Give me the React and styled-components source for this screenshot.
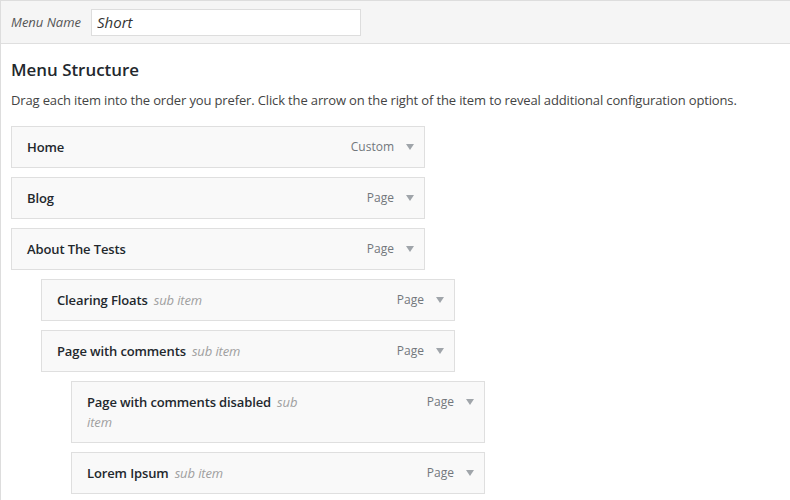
import styled, { createGlobalStyle } from 'styled-components';

const GlobalStyle = createGlobalStyle`
  html, body {
    margin: 0;
    padding: 0;
    background: #fff;
  }
  body {
    font-family: 'Open Sans', 'Noto Sans', sans-serif;
    color: #444;
  }
`;

const Frame = styled.div`
  border-left: 1px solid #ddd;
  border-top: 1px solid #ddd;
  min-height: 100vh;
  box-sizing: border-box;
  background: #fff;
`;

const Header = styled.div`
  display: flex;
  align-items: center;
  height: 42px;
  padding: 0 10px;
  background: #f5f5f5;
  border-bottom: 1px solid #dfdfdf;
`;

const NameLabel = styled.label`
  font-size: 13px;
  font-style: italic;
  color: #555;
  margin-right: 10px;
`;

const NameInput = styled.input`
  box-sizing: border-box;
  width: 270px;
  height: 27px;
  padding: 0 5px;
  border: 1px solid #ddd;
  background: #fff;
  font-family: inherit;
  font-size: 15px;
  font-style: italic;
  color: #333;
  outline: none;
`;

const Body = styled.div`
  padding: 0 10px;
`;

const Heading = styled.h3`
  margin: 14px 0 0;
  font-size: 16.9px;
  font-weight: 600;
  line-height: 24px;
  color: #23282d;
`;

const Description = styled.p`
  margin: 8px 0 0;
  font-size: 13px;
  line-height: 20px;
  letter-spacing: -0.14px;
  color: #444;
`;

const MenuList = styled.ul`
  list-style: none;
  margin: 16px 0 0;
  padding: 0;
`;

const MenuItem = styled.li`
  margin: 0 0 9px ${(p) => p.$depth * 30}px;
`;

const Handle = styled.div`
  position: relative;
  box-sizing: border-box;
  width: 414px;
  padding: 10px 15px;
  border: 1px solid #dfdfdf;
  background: #f9f9f9;
  line-height: 20px;
`;

const ItemTitle = styled.span`
  display: block;
  margin-right: 169px;
  font-size: 13px;
  font-weight: 600;
  letter-spacing: -0.12px;
  color: #23282d;
`;

const SubLabel = styled.span`
  margin-left: 6px;
  font-style: italic;
  font-weight: 400;
  color: #a0a0a0;
`;

const Controls = styled.span`
  position: absolute;
  top: 10px;
  right: 10px;
  display: flex;
  align-items: center;
  gap: 12px;
  height: 20px;
`;

const ItemType = styled.span`
  font-size: 12px;
  color: #72777c;
`;

const Arrow = () => (
  <svg width="8" height="6" viewBox="0 0 8 6">
    <polygon points="0,0 8,0 4,6" fill="#a0a5aa" />
  </svg>
);

const items = [
  { title: 'Home', type: 'Custom', depth: 0 },
  { title: 'Blog', type: 'Page', depth: 0 },
  { title: 'About The Tests', type: 'Page', depth: 0 },
  { title: 'Clearing Floats', type: 'Page', depth: 1 },
  { title: 'Page with comments', type: 'Page', depth: 1 },
  { title: 'Page with comments disabled', type: 'Page', depth: 2 },
  { title: 'Lorem Ipsum', type: 'Page', depth: 2 },
];

export default function App() {
  return (
    <>
      <GlobalStyle />
      <Frame>
        <Header>
          <NameLabel htmlFor="menu-name">Menu Name</NameLabel>
          <NameInput id="menu-name" defaultValue="Short" />
        </Header>
        <Body>
          <Heading>Menu Structure</Heading>
          <Description>
            Drag each item into the order you prefer. Click the arrow on the right of the item to reveal
            additional configuration options.
          </Description>
          <MenuList>
            {items.map((item) => (
              <MenuItem key={item.title} $depth={item.depth}>
                <Handle>
                  <ItemTitle>
                    {item.title}
                    {item.depth > 0 && <SubLabel>sub item</SubLabel>}
                  </ItemTitle>
                  <Controls>
                    <ItemType>{item.type}</ItemType>
                    <Arrow />
                  </Controls>
                </Handle>
              </MenuItem>
            ))}
          </MenuList>
        </Body>
      </Frame>
    </>
  );
}
